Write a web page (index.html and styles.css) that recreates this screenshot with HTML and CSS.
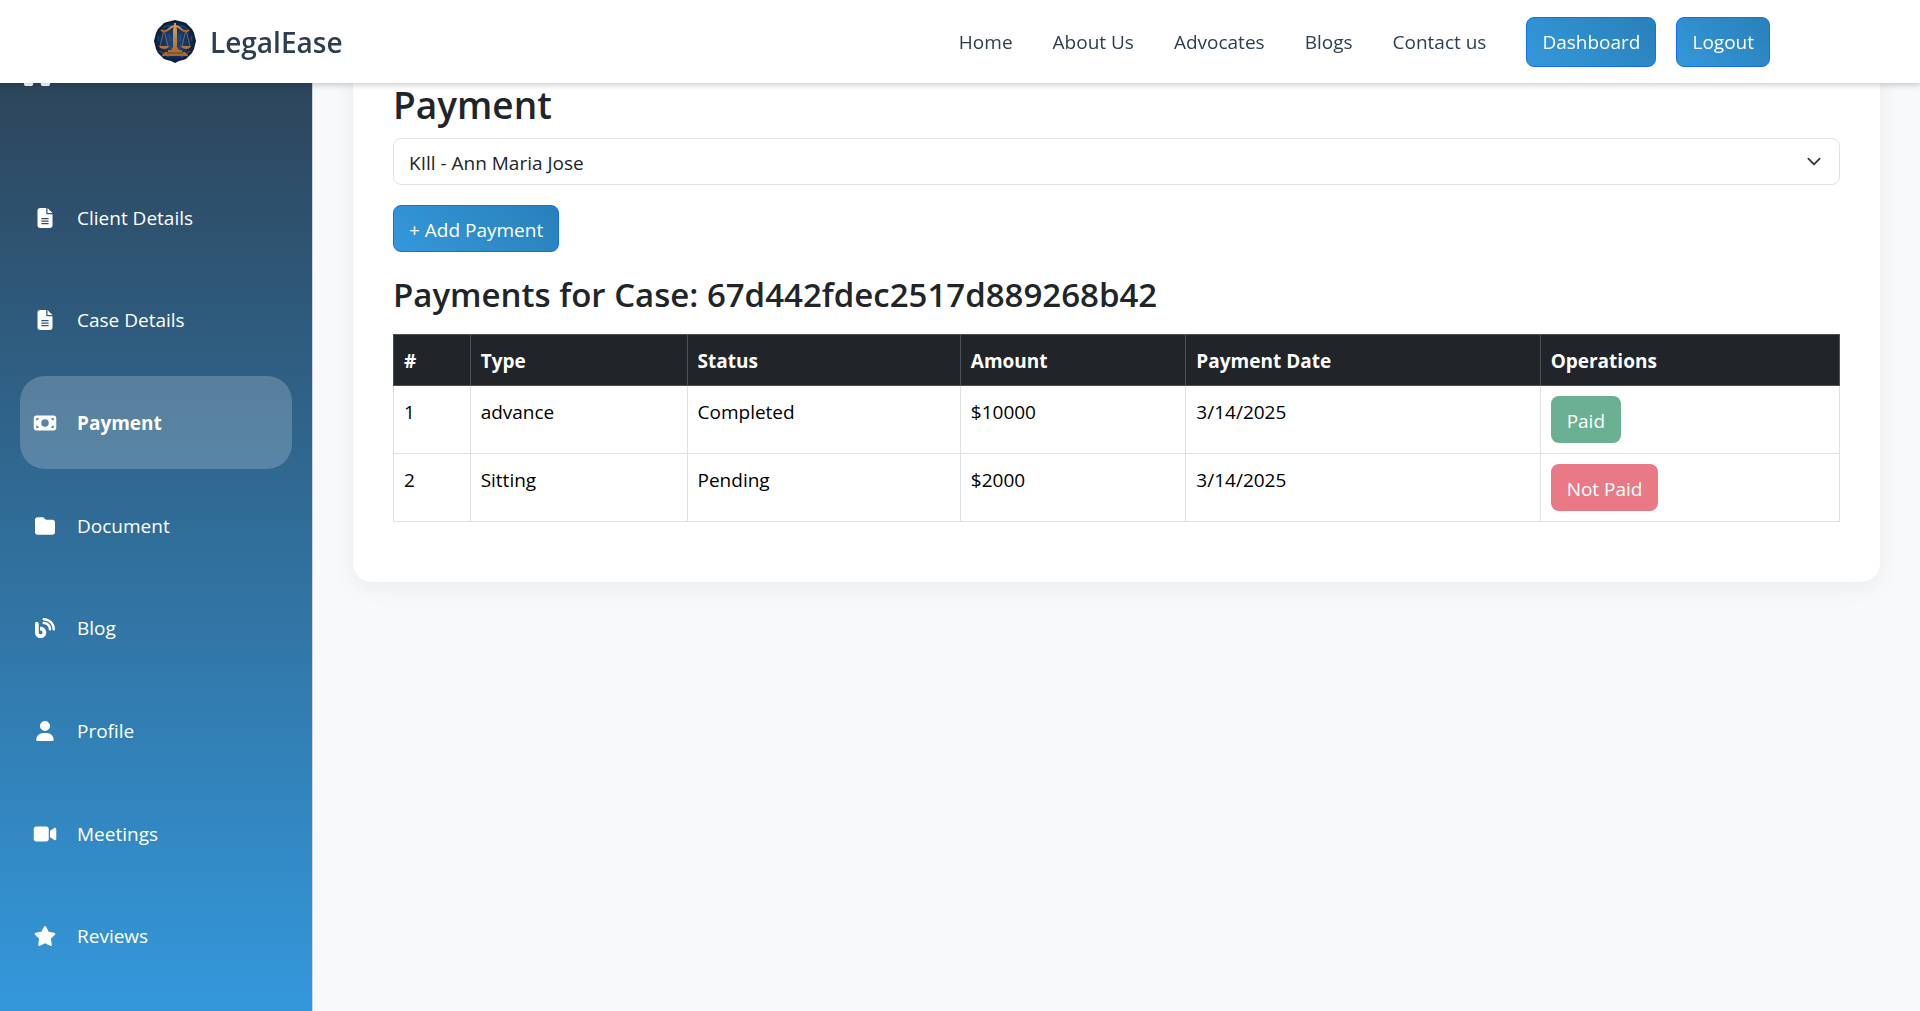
FILE: index.html
```html
<!DOCTYPE html>
<html lang="en">
<head>
<meta charset="utf-8">
<meta name="viewport" content="width=device-width, initial-scale=1">
<title>LegalEase - Payment</title>
<link rel="stylesheet" href="styles.css">
</head>
<body>
<header class="topbar">
  <div class="topbar-inner">
    <a class="brand" href="#">
      <svg class="brand-logo" viewBox="0 0 42 43" aria-hidden="true">
        <defs>
          <radialGradient id="disc"><stop offset="0" stop-color="#1b4a86"/><stop offset=".6" stop-color="#123463"/><stop offset="1" stop-color="#0c1a33"/></radialGradient>
          <linearGradient id="gold" x1="0" y1="0" x2="0" y2="1"><stop offset="0" stop-color="#d9a05c"/><stop offset="1" stop-color="#a8642c"/></linearGradient>
        </defs>
        <path fill="url(#disc)" d="M21 0l4 1 4 1 3 1 3 3 3 3 2 4 1 4 1 4-1 4-1 4-2 4-3 3-3 3-3 1-4 1-4 2-4-2-4-1-3-1-3-3-3-3-2-4-1-4-1-4 1-4 1-4 2-4 3-3 3-3 3-1 4-1z"/>
        <g fill="none" stroke="#2d6aa8" stroke-width="1" opacity=".7">
          <path d="M9 8q4-4 8-2M25 6q5-1 8 3M4 16q1 3 0 5M38 16q-1 3 0 5M7 31q3 5 8 6M35 31q-3 5-8 6M14 14q3 3 2 7M28 14q-3 3-2 7M15 25q2 2 1 4M27 25q-2 2-1 4"/>
        </g>
        <g fill="none" stroke="#7c4a25" stroke-width="1" opacity=".8"><path d="M5 31l4 2M37 31l-4 2M8 36l3-1M34 36l-3-1"/></g>
        <g stroke="#b07a48" stroke-width=".7" fill="none">
          <path d="M10 10L6 26M10 10l4 16M32 10l-4 16M32 10l4 16"/>
        </g>
        <path fill="none" stroke="url(#gold)" stroke-width="2" d="M7 10q4 3 8-1 3-3 6-3t6 3q4 4 8 1"/>
        <path fill="url(#gold)" d="M20 3h2v4l1 2v18l2 3h3v2h3l3 3v1H8v-1l3-3h3v-2h3l2-3V9l1-2zM5 26h10q-1 3-5 3t-5-3zM27 26h10q-1 3-5 3t-5-3z"/>
        <path stroke="#4f2d18" d="M13 33h16" stroke-width=".7"/>
      </svg>
      <span>LegalEase</span>
    </a>
    <nav class="topnav" aria-label="Main">
      <a href="#">Home</a>
      <a href="#">About Us</a>
      <a href="#">Advocates</a>
      <a href="#">Blogs</a>
      <a href="#">Contact us</a>
    </nav>
    <div class="account">
      <button class="btn btn-primary btn-tall" type="button">Dashboard</button>
      <button class="btn btn-primary btn-tall" type="button">Logout</button>
    </div>
  </div>
</header>

<div class="layout">
  <aside class="sidebar">
    <a class="side-home" href="#" aria-label="Dashboard home">
      <svg viewBox="0 0 576 512"><path d="M575.8 255.5c0 18-15 32.1-32 32.1h-32l.7 160.2c0 2.700-.2 5.400-.5 8.100V472c0 22.100-17.900 40-40 40H392c-22.100 0-40-17.900-40-40V384c0-17.700-14.300-32-32-32H256c-17.700 0-32 14.300-32 32v88c0 22.100-17.900 40-40 40H104c-22.100 0-40-17.900-40-40V287.600H32c-18 0-32-14-32-32.100c0-9 3-17 10-24L266.400 8c7-7 15-8 22-8s15 2 21 7L564.800 231.500c8 7 12 15 11 24z"/></svg>
    </a>
    <nav class="side-nav" aria-label="Dashboard">
      <a class="side-link" href="#"><svg viewBox="0 0 384 512"><path fill-rule="evenodd" d="M64 0C28.700 0 0 28.700 0 64V448c0 35.300 28.700 64 64 64H320c35.300 0 64-28.700 64-64V160H256c-17.700 0-32-14.300-32-32V0H64zM256 0V128H384L256 0zM112 256H272c8.800 0 16 7.200 16 16s-7.200 16-16 16H112c-8.800 0-16-7.200-16-16s7.200-16 16-16zm0 64H272c8.800 0 16 7.200 16 16s-7.200 16-16 16H112c-8.800 0-16-7.200-16-16s7.200-16 16-16zm0 64H272c8.800 0 16 7.200 16 16s-7.200 16-16 16H112c-8.800 0-16-7.200-16-16s7.200-16 16-16z"/></svg><span>Client Details</span></a>
      <a class="side-link" href="#"><svg viewBox="0 0 384 512"><path fill-rule="evenodd" d="M64 0C28.700 0 0 28.700 0 64V448c0 35.300 28.700 64 64 64H320c35.300 0 64-28.700 64-64V160H256c-17.700 0-32-14.300-32-32V0H64zM256 0V128H384L256 0zM112 256H272c8.800 0 16 7.200 16 16s-7.200 16-16 16H112c-8.800 0-16-7.200-16-16s7.200-16 16-16zm0 64H272c8.800 0 16 7.200 16 16s-7.200 16-16 16H112c-8.800 0-16-7.200-16-16s7.200-16 16-16zm0 64H272c8.800 0 16 7.200 16 16s-7.200 16-16 16H112c-8.800 0-16-7.200-16-16s7.200-16 16-16z"/></svg><span>Case Details</span></a>
      <a class="side-link active" href="#" aria-current="page"><svg viewBox="0 0 576 512"><path fill-rule="evenodd" d="M64 64C28.700 64 0 92.700 0 128V384c0 35.300 28.700 64 64 64H512c35.300 0 64-28.700 64-64V128c0-35.300-28.700-64-64-64H64zm64 320H64V320c35.300 0 64 28.700 64 64zM64 192V128h64c0 35.300-28.700 64-64 64zM448 384c0-35.300 28.700-64 64-64v64H448zm64-192c-35.300 0-64-28.700-64-64h64v64zM288 160a96 96 0 1 1 0 192 96 96 0 1 1 0-192z"/></svg><span>Payment</span></a>
      <a class="side-link" href="#"><svg viewBox="0 0 512 512"><path d="M64 480H448c35.300 0 64-28.700 64-64V160c0-35.300-28.700-64-64-64H288c-10.100 0-19.600-4.700-25.600-12.800L243.200 57.600C231.100 41.500 212.100 32 192 32H64C28.700 32 0 60.700 0 96V416c0 35.300 28.700 64 64 64z"/></svg><span>Document</span></a>
      <a class="side-link" href="#"><svg viewBox="0 0 512 512"><path d="M192 32c0 17.700 14.300 32 32 32c123.700 0 224 100.300 224 224c0 17.700 14.300 32 32 32s32-14.300 32-32C512 128.900 383.100 0 224 0c-17.700 0-32 14.300-32 32zm0 96c0 17.700 14.300 32 32 32c70.700 0 128 57.300 128 128c0 17.700 14.300 32 32 32s32-14.300 32-32c0-106-86-192-192-192c-17.700 0-32 14.300-32 32zM96 144c0-26.500-21.500-48-48-48S0 117.500 0 144V368c0 79.500 64.500 144 144 144s144-64.500 144-144s-64.500-144-144-144H128v96h16c26.500 0 48 21.500 48 48s-21.500 48-48 48s-48-21.500-48-48V144z"/></svg><span>Blog</span></a>
      <a class="side-link" href="#"><svg viewBox="0 0 448 512"><path d="M224 256A128 128 0 1 0 224 0a128 128 0 1 0 0 256zm-45.700 48C79.800 304 0 383.800 0 482.300C0 498.700 13.300 512 29.700 512H418.300c16.400 0 29.700-13.300 29.700-29.700C448 383.800 368.200 304 269.700 304H178.300z"/></svg><span>Profile</span></a>
      <a class="side-link" href="#"><svg viewBox="0 0 576 512"><path d="M0 128C0 92.700 28.700 64 64 64H320c35.300 0 64 28.700 64 64V384c0 35.300-28.700 64-64 64H64c-35.300 0-64-28.700-64-64V128zM559.100 99.800c10.400 5.600 16.900 16.400 16.900 28.200V384c0 11.800-6.500 22.600-16.900 28.200s-23 5-32.900-1.600l-96-64L416 337.100V174.900l14.200-9.500 96-64c9.800-6.500 22.400-7.200 32.900-1.600z"/></svg><span>Meetings</span></a>
      <a class="side-link" href="#"><svg viewBox="0 0 576 512"><path d="M316.900 18C311.600 7 300.400 0 288.100 0s-23.400 7-28.800 18L195 150.300 51.400 171.500c-12 1.800-22 10.200-25.700 21.700s-.7 24.200 7.900 32.700L137.800 329 113.200 474.700c-2 12 3 24.200 12.900 31.300s23 8 33.800 2.300l128.300-68.500 128.300 68.500c10.800 5.700 23.900 4.900 33.800-2.300s14.900-19.300 12.900-31.300L438.500 329 542.700 225.900c8.600-8.500 11.700-21.200 7.900-32.700s-13.700-19.900-25.700-21.700L381.200 150.300 316.900 18z"/></svg><span>Reviews</span></a>
    </nav>
  </aside>

  <main class="content">
    <section class="card">
      <h1 class="page-title"><label for="case-select">Payment</label></h1>
      <select class="case-select" id="case-select">
        <option>KIll - Ann Maria Jose</option>
      </select>
      <button class="btn btn-primary" type="button">+ Add Payment</button>
      <h2 class="case-title">Payments for Case: 67d442fdec2517d889268b42</h2>
      <table class="payments">
        <colgroup><col class="col-num"><col class="col-type"><col class="col-status"><col class="col-amount"><col class="col-date"><col></colgroup>
        <thead>
          <tr><th scope="col">#</th><th scope="col">Type</th><th scope="col">Status</th><th scope="col">Amount</th><th scope="col">Payment Date</th><th scope="col">Operations</th></tr>
        </thead>
        <tbody>
          <tr><td>1</td><td>advance</td><td>Completed</td><td>$10000</td><td>3/14/2025</td><td><button class="btn btn-paid" type="button" disabled>Paid</button></td></tr>
          <tr><td>2</td><td>Sitting</td><td>Pending</td><td>$2000</td><td>3/14/2025</td><td><button class="btn btn-unpaid" type="button" disabled>Not Paid</button></td></tr>
        </tbody>
      </table>
    </section>
  </main>
</div>
</body>
</html>
```
FILE: styles.css
```css
* { box-sizing: border-box; }

body {
  margin: 0;
  background: #f8f9fb;
  color: #212529;
  font: 400 19px/30px "Segoe UI", "Open Sans", "Noto Sans", sans-serif;
}

a { color: inherit; text-decoration: none; }

/* Top bar */
.topbar {
  position: fixed;
  inset: 0 0 auto;
  z-index: 10;
  background: #fff;
  box-shadow: 0 2px 6px rgba(0, 0, 0, .2);
}

.topbar-inner {
  display: flex;
  align-items: center;
  max-width: 1650px;
  min-height: 83px;
  margin: 0 auto;
  padding: 0 15px;
  color: #2c3e50;
}

.brand {
  display: flex;
  align-items: center;
  gap: 14px;
  margin-right: auto;
  padding-left: 4px;
  font-size: 28px;
  font-weight: 600;
}

.brand-logo { width: 42px; height: 43px; }

.topnav { display: flex; gap: 40px; }

.account { display: flex; gap: 20px; margin-left: 40px; }

/* Buttons */
.btn {
  display: inline-block;
  height: 47px;
  padding: 2px 15px 0;
  border: 1px solid transparent;
  border-radius: 8px;
  color: #fff;
  font: inherit;
  cursor: pointer;
}

.btn-primary {
  border-color: #0d6efd;
  background: linear-gradient(45deg, #3498db, #2980b9);
  font-weight: 500;
}

.btn-tall { height: 50px; padding: 0 15px; }
.btn:disabled { cursor: default; }
.btn-paid { background: #6ab092; }
.btn-unpaid { background: #e97a85; }

/* Sidebar */
.layout { display: flex; align-items: flex-start; }

.sidebar {
  position: sticky;
  top: 0;
  display: flex;
  flex: none;
  flex-direction: column;
  width: 313px;
  height: 100vh;
  padding: 56px 20px 28px;
  border-right: 1px solid #ced4da;
  background: linear-gradient(180deg, #2c3e50, #3498db);
  color: #fff;
}

.side-home { display: flex; margin-bottom: 85px; }
.side-home svg { width: 34px; height: 30px; fill: #fff; }

.side-nav {
  display: flex;
  flex: 1;
  flex-direction: column;
  justify-content: space-between;
}

.side-link {
  display: flex;
  align-items: center;
  gap: 20px;
  height: 93px;
  padding: 0 13px;
  border-radius: 25px;
}

.side-link svg { width: 24px; height: 20px; fill: #fff; }

.side-link.active {
  background: rgba(255, 255, 255, .2);
  font-weight: 700;
}

/* Payment card */
.content { flex: 1; min-width: 0; padding: 40px; }

.card {
  padding: 40px 40px 60px;
  border-radius: 19px;
  background: #fff;
  box-shadow: 0 5px 25px rgba(0, 0, 0, .06);
}

.page-title {
  margin: 0 0 8px;
  font-size: 37px;
  font-weight: 600;
  line-height: 50px;
}

.case-select {
  display: block;
  width: 100%;
  height: 47px;
  margin-bottom: 20px;
  padding: 2px 45px 0 15px;
  border: 1px solid #dee2e6;
  border-radius: 8px;
  appearance: none;
  background: #fff url("data:image/svg+xml,%3Csvg xmlns='http://www.w3.org/2000/svg' viewBox='0 0 16 16'%3E%3Cpath fill='none' stroke='%23343a40' stroke-linecap='round' stroke-linejoin='round' stroke-width='2' d='m2 5 6 6 6-6'/%3E%3C/svg%3E") no-repeat right 15px center / 20px 15px;
  color: #212529;
  font: inherit;
}

.case-title {
  margin: 20px 0 16px;
  font-size: 33px;
  font-weight: 600;
  line-height: 46px;
}

.payments {
  width: 100%;
  border-collapse: collapse;
  table-layout: fixed;
  color: #000;
}

.payments th,
.payments td {
  padding: 10px;
  border: 1px solid #dee2e6;
  line-height: 32px;
  text-align: left;
  vertical-align: top;
}

.payments th {
  padding-bottom: 8px;
  border-color: #4d5154;
  background: #212529;
  color: #fff;
  font-weight: 700;
}

.payments .btn { display: block; line-height: 30px; }

.col-num { width: 5.3%; }
.col-type { width: 15%; }
.col-status { width: 18.9%; }
.col-amount { width: 15.6%; }
.col-date { width: 24.5%; }
```
